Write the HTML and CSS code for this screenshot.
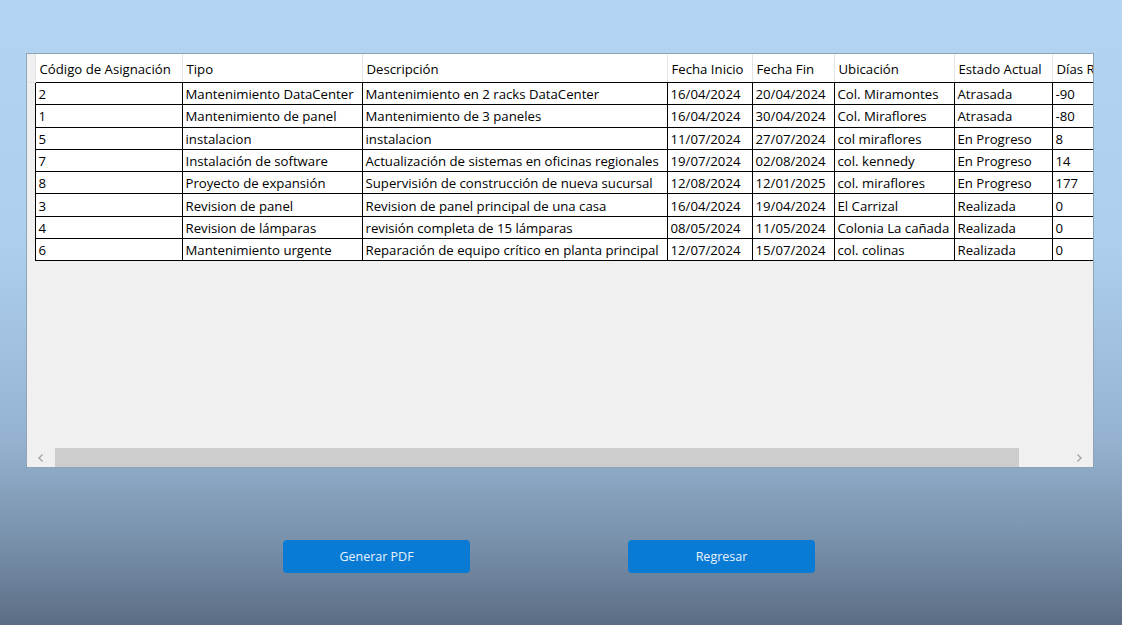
FILE: index.html
```html
<!DOCTYPE html>
<html lang="es">
<head>
<meta charset="utf-8">
<title>Asignaciones</title>
<link rel="stylesheet" href="styles.css">
</head>
<body>
<div class="page">
  <div class="grid">
    <div class="viewport">
      <table class="data">
        <colgroup>
          <col class="c-rh"><col class="c1"><col class="c2"><col class="c3"><col class="c4"><col class="c5"><col class="c6"><col class="c7"><col class="c8">
        </colgroup>
        <thead>
          <tr><th class="rh"></th><th>Código de Asignación</th><th>Tipo</th><th>Descripción</th><th>Fecha Inicio</th><th>Fecha Fin</th><th>Ubicación</th><th>Estado Actual</th><th>Días Restantes</th></tr>
        </thead>
        <tbody>
          <tr><td class="rh"></td><td>2</td><td>Mantenimiento DataCenter</td><td>Mantenimiento en 2 racks DataCenter</td><td>16/04/2024</td><td>20/04/2024</td><td>Col. Miramontes</td><td>Atrasada</td><td>-90</td></tr>
          <tr><td class="rh"></td><td>1</td><td>Mantenimiento de panel</td><td>Mantenimiento de 3 paneles</td><td>16/04/2024</td><td>30/04/2024</td><td>Col. Miraflores</td><td>Atrasada</td><td>-80</td></tr>
          <tr><td class="rh"></td><td>5</td><td>instalacion</td><td>instalacion</td><td>11/07/2024</td><td>27/07/2024</td><td>col miraflores</td><td>En Progreso</td><td>8</td></tr>
          <tr><td class="rh"></td><td>7</td><td>Instalación de software</td><td>Actualización de sistemas en oficinas regionales</td><td>19/07/2024</td><td>02/08/2024</td><td>col. kennedy</td><td>En Progreso</td><td>14</td></tr>
          <tr><td class="rh"></td><td>8</td><td>Proyecto de expansión</td><td>Supervisión de construcción de nueva sucursal</td><td>12/08/2024</td><td>12/01/2025</td><td>col. miraflores</td><td>En Progreso</td><td>177</td></tr>
          <tr><td class="rh"></td><td>3</td><td>Revision de panel</td><td>Revision de panel principal de una casa</td><td>16/04/2024</td><td>19/04/2024</td><td>El Carrizal</td><td>Realizada</td><td>0</td></tr>
          <tr><td class="rh"></td><td>4</td><td>Revision de lámparas</td><td>revisión completa de 15 lámparas</td><td>08/05/2024</td><td>11/05/2024</td><td>Colonia La cañada</td><td>Realizada</td><td>0</td></tr>
          <tr><td class="rh"></td><td>6</td><td>Mantenimiento urgente</td><td>Reparación de equipo crítico en planta principal</td><td>12/07/2024</td><td>15/07/2024</td><td>col. colinas</td><td>Realizada</td><td>0</td></tr>
        </tbody>
      </table>
    </div>
    <div class="hscroll">
      <span class="arrow">
        <svg width="8" height="10" viewBox="0 0 8 10"><path d="M5.5 1.5 L2 5 L5.5 8.5" fill="none" stroke="#a0a0a0" stroke-width="1.3"/></svg>
      </span>
      <div class="track"><div class="thumb"></div></div>
      <span class="arrow">
        <svg width="8" height="10" viewBox="0 0 8 10"><path d="M2.5 1.5 L6 5 L2.5 8.5" fill="none" stroke="#a0a0a0" stroke-width="1.3"/></svg>
      </span>
    </div>
  </div>
  <div class="actions">
    <button class="btn" type="button">Generar PDF</button>
    <button class="btn" type="button">Regresar</button>
  </div>
</div>
</body>
</html>
```
FILE: styles.css
```css
html, body {
  margin: 0;
  padding: 0;
  height: 100%;
}
body {
  background: linear-gradient(to bottom, #b4d5f1 0%, #adcfec 40%, #95b3d0 70%, #7890aa 87%, #5b6d84 100%);
  font-family: "Open Sans", "Noto Sans", "Liberation Sans", sans-serif;
  overflow: hidden;
}
.page {
  width: 1122px;
  height: 625px;
  padding-top: 53px;
  box-sizing: border-box;
}
.grid {
  margin-left: 26px;
  width: 1068px;
  height: 415px;
  box-sizing: border-box;
  border: 1px solid #8ea4bb;
  background: #f0f0f0;
  display: flex;
  flex-direction: column;
}
.viewport {
  flex: 1;
  overflow: hidden;
}
.data {
  border-collapse: collapse;
  table-layout: fixed;
  width: 1170px;
  font-size: 13.2px;
  color: #000;
}
.c-rh { width: 8px; }
.c1 { width: 147px; }
.c2 { width: 180px; }
.c3 { width: 305px; }
.c4 { width: 85px; }
.c5 { width: 82px; }
.c6 { width: 120px; }
.c7 { width: 98px; }
.c8 { width: 145px; }
.data th {
  height: 27px;
  padding: 1px 4px 0;
  line-height: 18px;
  background: #fff;
  font-weight: normal;
  text-align: left;
  white-space: nowrap;
  overflow: hidden;
  border-right: 1px solid #e4e4e4;
  border-bottom: 1px solid #000;
}
.data th.rh {
  background: #f0f0f0;
  border-right: 1px solid #e4e4e4;
  border-bottom: 1px solid #e4e4e4;
  padding: 0;
}
.data td {
  height: 20.3px;
  padding: 1px 3px 0;
  line-height: 18px;
  background: #fff;
  white-space: nowrap;
  overflow: hidden;
  border: 1px solid #000;
}
.data td.rh {
  background: #f0f0f0;
  border: none;
  border-right: 1px solid #000;
  padding: 0;
}
.hscroll {
  height: 19px;
  display: flex;
  align-items: stretch;
  background: #f0f0f0;
}
.arrow {
  width: 28px;
  display: flex;
  align-items: center;
  justify-content: center;
}
.track {
  flex: 1;
  display: flex;
}
.thumb {
  width: 964px;
  background: #cdcdcd;
}
.actions {
  display: flex;
  gap: 158px;
  padding-left: 283px;
  margin-top: 72px;
}
.btn {
  width: 187px;
  height: 33px;
  border: none;
  border-radius: 4px;
  background: #0a7bd4;
  color: #e6f2ff;
  font-family: "Open Sans", "Noto Sans", sans-serif;
  font-size: 12.5px;
  padding: 0;
}
```
